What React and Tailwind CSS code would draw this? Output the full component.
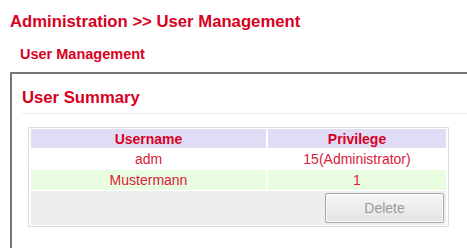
export default function App() {
  const red = 'text-[#d8001f]'
  return (
    <div className="w-[467px] h-[248px] overflow-hidden bg-white font-['Liberation_Sans',Arial,sans-serif]">
      <h1 className={`pl-[10px] pt-[12px] text-[16.7px] leading-[20px] font-bold ${red}`}>
        Administration &gt;&gt; User Management
      </h1>
      <h2 className={`pl-[20px] mt-[14px] text-[14.5px] leading-[16px] font-bold ${red}`}>
        User Management
      </h2>

      <div className="ml-[10px] mt-[10px] border-l-2 border-t-2 border-[#777] pl-[10px] pt-[14px] pb-6">
        <h3 className={`text-[16.7px] leading-[20px] font-bold ${red}`}>User Summary</h3>
        <div className="mt-[5px] border-b border-[#ececec]" />

        <table className="ml-[6px] mt-[13px] w-[421px] border border-[#dcdcdc] border-separate border-spacing-x-[2px] border-spacing-y-[1px] text-[14px] leading-[18px] text-[#d8203a]">
          <thead>
            <tr className="bg-[#e1dcf6]">
              <th className={`h-[19px] p-0 w-[235px] font-bold text-[14px] ${red}`}>Username</th>
              <th className={`h-[19px] p-0 font-bold text-[14px] ${red}`}>Privilege</th>
            </tr>
          </thead>
          <tbody>
            <tr className="bg-white">
              <td className="h-[20px] p-0 text-center">adm</td>
              <td className="h-[20px] p-0 text-center">15(Administrator)</td>
            </tr>
            <tr className="bg-[#e8fddf]">
              <td className="h-[20px] p-0 text-center">Mustermann</td>
              <td className="h-[20px] p-0 text-center">1</td>
            </tr>
            <tr className="bg-[#eeeeee]">
              <td colSpan={2} className="h-[34px] p-0">
                <div className="flex justify-end pr-[2px]">
                  <button className="w-[119px] h-[30px] rounded-[2px] border border-[#a9a9a9] bg-linear-to-b from-[#f7f7f7] to-[#e2e2e2] text-[14px] text-[#9a9a9a] shadow-[inset_0_0_0_1px_#fafafa]">
                    Delete
                  </button>
                </div>
              </td>
            </tr>
          </tbody>
        </table>
      </div>
    </div>
  )
}
